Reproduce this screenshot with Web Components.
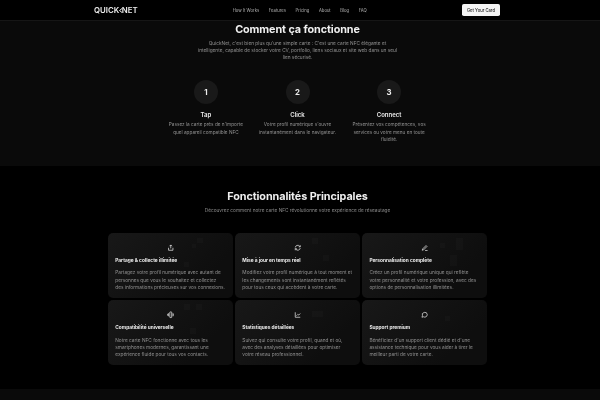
<!DOCTYPE html>
<html lang="fr">
<head>
<meta charset="utf-8">
<title>QuickNet</title>
<style>
  html, body { margin: 0; background: #000; height: 400px; overflow: hidden; }
  body { font-family: Inter, "Liberation Sans", sans-serif; color: #fff; }
</style>
</head>
<body>
<site-nav></site-nav>
<how-section></how-section>
<features-section></features-section>
<site-footer></site-footer>

<script>
// --- WEB COMPONENTS ---
class SiteNav extends HTMLElement {
  constructor() {
    super();
    this.attachShadow({ mode: 'open' });
    this.shadowRoot.innerHTML = `
      <style>
        :host { display: flex; align-items: center; justify-content: space-between; height: 21px; box-sizing: border-box; padding: 0 100px 0 94px; background: #000; border-bottom: 0.5px solid #161616; }
        .logo { display: flex; align-items: center; font-size: 7.8px; font-weight: 600; color: #eee; filter: blur(0.35px); }
        .logo svg { width: 3px; height: 5px; margin-right: -0.4px; fill: none; stroke: #eee; stroke-width: 1; }
        nav { display: flex; gap: 9.6px; font-size: 4.2px; color: #b0b0b0; filter: blur(0.35px); }
        .btn { background: #f4f4f4; color: #222; font-size: 4.2px; font-weight: 500; width: 38px; height: 12px; border-radius: 1.8px; display: flex; align-items: center; justify-content: center; filter: blur(0.35px); }
      </style>
      <div class="logo">QUICK<svg viewBox="0 0 3 5"><path d="M3 .5L.5 2.5 3 4.5"/></svg>NET</div>
      <nav><span>How It Works</span><span>Features</span><span>Pricing</span><span>About</span><span>Blog</span><span>FAQ</span></nav>
      <div class="btn">Get Your Card</div>`;
  }
}

class StepItem extends HTMLElement {
  constructor() {
    super();
    this.attachShadow({ mode: 'open' });
    this.shadowRoot.innerHTML = `
      <style>
        :host { display: flex; flex-direction: column; align-items: center; text-align: center; }
        .num { width: 24px; height: 24px; border-radius: 50%; background: #191919; display: flex; align-items: center; justify-content: center; font-size: 7.8px; font-weight: 700; color: #eee; }
        h3 { margin: 7.5px 0 0; font-size: 6px; line-height: 8px; font-weight: 600; color: #eee; }
        p { margin: 2.2px 0 0; width: 80px; font-size: 4.7px; line-height: 7.2px; color: #949494; }
      </style>
      <div class="num"></div>
      <h3></h3>
      <p><slot></slot></p>`;
  }
  connectedCallback() {
    this.shadowRoot.querySelector('.num').textContent = this.getAttribute('num');
    this.shadowRoot.querySelector('h3').textContent = this.getAttribute('title');
  }
}

class HowSection extends HTMLElement {
  constructor() {
    super();
    this.attachShadow({ mode: 'open' });
    this.shadowRoot.innerHTML = `
      <style>
        :host { display: block; height: 145px; box-sizing: border-box; background: #0a0a0a; padding: 1.5px 5px 0 0; text-align: center; }
        .wrap { filter: blur(0.35px); }
        h2 { margin: 0; font-size: 10.8px; letter-spacing: -0.08px; line-height: 14px; font-weight: 700; color: #f0f0f0; }
        .lead { margin: 3.1px auto 0; width: 204px; font-size: 4.75px; line-height: 7.2px; color: #949494; }
        .steps { display: grid; grid-template-columns: repeat(3, 91.6px); justify-content: center; margin-top: 18.5px; }
      </style>
      <div class="wrap">
      <h2>Comment ça fonctionne</h2>
      <p class="lead">QuickNet, c'est bien plus qu'une simple carte : C'est une carte NFC élégante et<br>intelligente, capable de stocker votre CV, portfolio, liens sociaux et site web dans un seul lien sécurisé.</p>
      <div class="steps">
        <step-item num="1" title="Tap">Passez la carte près de n'importe quel appareil compatible NFC</step-item>
        <step-item num="2" title="Click">Votre profil numérique s'ouvre instantanément dans le navigateur.</step-item>
        <step-item num="3" title="Connect">Présentez vos compétences, vos services ou votre menu en toute fluidité.</step-item>
      </div>
      </div>`;
  }
}

const ICONS = {
  share: '<path d="M12 3v11M8 7l4-4 4 4M5 12v8h14v-8"/>',
  sync: '<path d="M4 11a8 8 0 0 1 14-4l2 2M20 4v5h-5M20 13a8 8 0 0 1-14 4l-2-2M4 20v-5h5"/>',
  pen: '<path d="M4 20l1-4L16 5l3 3L8 19zM13 21h8"/>',
  nfc: '<rect x="9" y="3" width="6" height="18" rx="1"/><path d="M5 7v10M2 9v6M19 7v10M22 9v6"/>',
  chart: '<path d="M4 4v16h16M8 15l4-4 3 2 5-5"/>',
  chat: '<path d="M20 11.5a8 8 0 0 1-12 7L3 20l1.5-5A8 8 0 1 1 20 11.5z"/>'
};

class FeatureCard extends HTMLElement {
  constructor() {
    super();
    this.attachShadow({ mode: 'open' });
    this.shadowRoot.innerHTML = `
      <style>
        :host { display: block; position: relative; overflow: hidden; box-sizing: border-box; height: 64.8px; padding: 7.2px; border-radius: 5px; background: radial-gradient(rgba(255,255,255,.02) 0.5px, transparent 0.6px) 0 0 / 2px 2px, linear-gradient(135deg, #181818, #0e0e0e 75%); }
        .mark { position: absolute; background: rgba(255,255,255,.02); }
        .body { position: relative; filter: blur(0.35px); }
        .icon { display: flex; justify-content: center; height: 9px; margin-top: 3.5px; }
        svg { width: 7.5px; height: 7.5px; fill: none; stroke: #e4e4e4; stroke-width: 2.4; }
        h3 { margin: 4px 0 0; font-size: 4.8px; line-height: 6px; font-weight: 700; color: #eee; }
        p { margin: 6.5px 0 0; font-size: 4.76px; line-height: 7.2px; color: #929292; }
      </style>
      <div class="body">
      <div class="icon"><svg viewBox="0 0 24 24"></svg></div>
      <h3></h3>
      <p><slot></slot></p>
      </div>`;
  }
  connectedCallback() {
    this.shadowRoot.querySelector('svg').innerHTML = ICONS[this.getAttribute('icon')];
    this.shadowRoot.querySelector('h3').textContent = this.getAttribute('title');
    // faint squares of the card background texture
    (this.getAttribute('marks') || '').split(';').filter(Boolean).forEach(m => {
      const [x, y, w, h] = m.split(',');
      const el = document.createElement('div');
      el.className = 'mark';
      el.style.cssText = `left:${x}px;top:${y}px;width:${w}px;height:${h}px`;
      this.shadowRoot.prepend(el);
    });
  }
}

class FeaturesSection extends HTMLElement {
  constructor() {
    super();
    this.attachShadow({ mode: 'open' });
    this.shadowRoot.innerHTML = `
      <style>
        :host { display: block; height: 223px; box-sizing: border-box; background: #000; padding: 23px 5px 0 0; text-align: center; }
        .head { filter: blur(0.35px); }
        h2 { margin: 0; font-size: 10.8px; letter-spacing: -0.08px; line-height: 16px; font-weight: 700; color: #eee; }
        .sub { margin: 2px 0 0; font-size: 4.75px; line-height: 7.2px; color: #8c8c8c; }
        .grid { display: grid; grid-template-columns: repeat(3, 124.7px); gap: 2.4px; justify-content: center; margin-top: 19px; text-align: left; }
      </style>
      <div class="head">
      <h2>Fonctionnalités Principales</h2>
      <p class="sub">Découvrez comment notre carte NFC révolutionne votre expérience de réseautage</p>
      </div>
      <div class="grid">
        <feature-card icon="share" marks="89,4.5,5.5,5.5;84,11,4,4;76,29,5,5" title="Partage &amp; collecte illimitée">Partagez votre profil numérique avec autant de personnes que vous le souhaitez et collectez des informations précieuses sur vos connexions.</feature-card>
        <feature-card icon="sync" marks="77,4.5,6,6;88,22,6,6" title="Mise à jour en temps réel">Modifiez votre profil numérique à tout moment et les changements sont instantanément reflétés pour tous ceux qui accèdent à votre carte.</feature-card>
        <feature-card icon="pen" marks="94,4.5,7,12;78,10,5,5;88,22,7,11" title="Personnalisation complète">Créez un profil numérique unique qui reflète votre personnalité et votre profession, avec des options de personnalisation illimitées.</feature-card>
        <feature-card icon="nfc" marks="76,4,6,6;88,4,6,6;82,28,6,6" title="Compatibilité universelle">Notre carte NFC fonctionne avec tous les smartphones modernes, garantissant une expérience fluide pour tous vos contacts.</feature-card>
        <feature-card icon="chart" marks="77,11,11,6" title="Statistiques détaillées">Suivez qui consulte votre profil, quand et où, avec des analyses détaillées pour optimiser votre réseau professionnel.</feature-card>
        <feature-card icon="chat" marks="83,16,5,5" title="Support premium">Bénéficiez d'un support client dédié et d'une assistance technique pour vous aider à tirer le meilleur parti de votre carte.</feature-card>
      </div>`;
  }
}

class SiteFooter extends HTMLElement {
  constructor() {
    super();
    this.attachShadow({ mode: 'open' });
    this.shadowRoot.innerHTML = `<style>:host { display: block; height: 11px; background: #0a0a0a; }</style>`;
  }
}

customElements.define('site-nav', SiteNav);
customElements.define('step-item', StepItem);
customElements.define('how-section', HowSection);
customElements.define('feature-card', FeatureCard);
customElements.define('features-section', FeaturesSection);
customElements.define('site-footer', SiteFooter);
</script>
</body>
</html>
